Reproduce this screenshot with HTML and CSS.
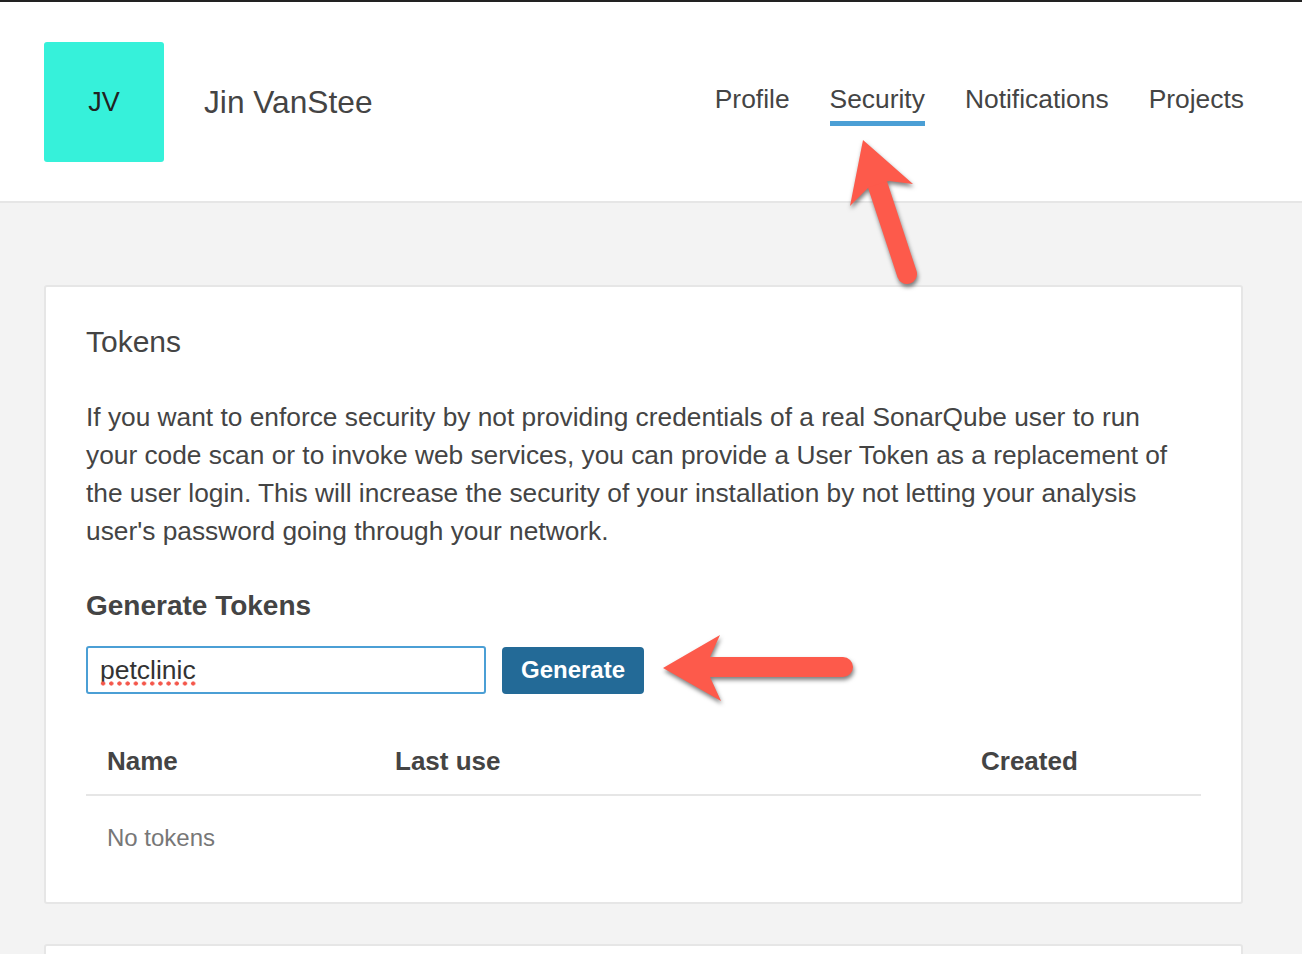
FILE: index.html
```html
<!DOCTYPE html>
<html lang="en">
<head>
<meta charset="utf-8">
<title>Jin VanStee - Security</title>
<link rel="stylesheet" href="styles.css">
</head>
<body>
<div class="topline"></div>
<header class="account-header">
  <div class="account-user">
    <div class="avatar">JV</div>
    <h1 class="user-name">Jin VanStee</h1>
  </div>
  <nav class="account-nav">
    <a class="nav-link" href="#">Profile</a>
    <a class="nav-link active" href="#">Security</a>
    <a class="nav-link" href="#">Notifications</a>
    <a class="nav-link" href="#">Projects</a>
  </nav>
</header>

<main class="page">
  <section class="card">
    <h2 class="card-title">Tokens</h2>
    <p class="card-text">If you want to enforce security by not providing credentials of a real SonarQube user to run your code scan or to invoke web services, you can provide a User Token as a replacement of the user login. This will increase the security of your installation by not letting your analysis user's password going through your network.</p>
    <h3 class="sub-title">Generate Tokens</h3>
    <form class="token-form">
      <label class="field">
        <input class="token-input" type="text" value="petclinic">
      </label>
      <button class="btn-primary" type="button">Generate</button>
    </form>
    <table class="token-table">
      <colgroup>
        <col class="c-name"><col class="c-last"><col class="c-created"><col>
      </colgroup>
      <thead>
        <tr><th>Name</th><th>Last use</th><th>Created</th><th></th></tr>
      </thead>
      <tbody>
        <tr><td class="empty" colspan="4">No tokens</td></tr>
      </tbody>
    </table>
  </section>
  <section class="card card-next"></section>
</main>

<svg class="annotations" width="1302" height="954" viewBox="0 0 1302 954" aria-hidden="true">
  <g class="arrow">
    <line x1="878" y1="186" x2="907" y2="274" stroke="#fd5a4b" stroke-width="20" stroke-linecap="round"/>
    <polygon points="863,140 913,184 889,181 869,187 850,206" fill="#fd5a4b"/>
  </g>
  <g class="arrow">
    <line x1="706" y1="667" x2="843" y2="667" stroke="#fd5a4b" stroke-width="20" stroke-linecap="round"/>
    <polygon points="663,668 720,635 710,657 710,677 721,701" fill="#fd5a4b"/>
  </g>
</svg>
</body>
</html>
```

FILE: styles.css
```css
* { box-sizing: border-box; }

html, body {
  margin: 0;
  padding: 0;
}

body {
  background: #f3f3f3;
  font-family: "Liberation Sans", Arial, "Helvetica Neue", sans-serif;
  color: #444;
  width: 1302px;
  height: 954px;
  overflow: hidden;
  position: relative;
}

.topline {
  height: 2px;
  background: #222;
}

.account-header {
  display: flex;
  justify-content: space-between;
  align-items: flex-start;
  background: #fff;
  padding: 40px 58px 39px 44px;
  border-bottom: 2px solid #e6e6e6;
}

.account-user {
  display: flex;
  align-items: center;
  gap: 40px;
}

.avatar {
  width: 120px;
  height: 120px;
  border-radius: 3px;
  background: #36f1da;
  color: #222;
  font-size: 27px;
  display: flex;
  align-items: center;
  justify-content: center;
}

.user-name {
  margin: 0;
  font-size: 31.7px;
  font-weight: normal;
  line-height: 38px;
  color: #444;
}

.account-nav {
  display: flex;
  gap: 40px;
  margin-top: 41px;
}

.nav-link {
  display: block;
  font-size: 26.4px;
  line-height: 32px;
  color: #444;
  text-decoration: none;
  padding-bottom: 6px;
  border-bottom: 5px solid transparent;
}

.nav-link.active {
  border-bottom-color: #4b9fd5;
}

.page {
  padding: 82px 59px 0 44px;
}

.card {
  background: #fff;
  border: 2px solid #e6e6e6;
  border-radius: 3px;
  padding: 40px 40px 41px 40px;
}

.card-next {
  margin-top: 40px;
  height: 60px;
  padding: 0;
}

.card-title {
  margin: 0;
  font-size: 30px;
  line-height: 30px;
  font-weight: normal;
  color: #444;
}

.card-text {
  margin: 41px 0 0;
  max-width: 1090px;
  font-size: 26.3px;
  line-height: 38px;
  color: #444;
}

.sub-title {
  margin: 40px 0 0;
  font-size: 28px;
  line-height: 32px;
  font-weight: bold;
  color: #444;
}

.token-form {
  display: flex;
  align-items: center;
  gap: 16px;
  margin-top: 24px;
}

.field {
  position: relative;
  display: block;
}

.field::after {
  content: "";
  position: absolute;
  left: 13px;
  top: 35px;
  width: 98px;
  height: 5px;
  background: radial-gradient(circle, #f4574b 1.8px, transparent 2.4px) 0 0 / 8.2px 5px repeat-x;
}

.token-input {
  display: block;
  width: 400px;
  height: 48px;
  border: 2px solid #4b9fd5;
  border-radius: 3px;
  padding: 0 12px;
  font-family: inherit;
  font-size: 26.5px;
  color: #333;
  background: #fff;
  outline: none;
}

.btn-primary {
  width: 142px;
  height: 47px;
  border: none;
  border-radius: 4px;
  background: #236a97;
  color: #fff;
  font-family: inherit;
  font-size: 24px;
  font-weight: bold;
  padding: 0;
}

.token-table {
  width: 100%;
  table-layout: fixed;
  border-collapse: collapse;
  margin-top: 51px;
}

.c-name { width: 288px; }
.c-last { width: 586px; }
.c-created { width: 140px; }

.token-table th {
  text-align: left;
  font-size: 26px;
  line-height: 32px;
  font-weight: bold;
  color: #444;
  padding: 0 21px 17px;
  border-bottom: 2px solid #e6e6e6;
}

.token-table td.empty {
  font-size: 24px;
  line-height: 30px;
  color: #777;
  padding: 27px 21px 8px;
}

.annotations {
  position: absolute;
  left: 0;
  top: 0;
  pointer-events: none;
}

.arrow {
  filter: drop-shadow(1px 3px 2px rgba(0, 0, 0, 0.5));
}
```
